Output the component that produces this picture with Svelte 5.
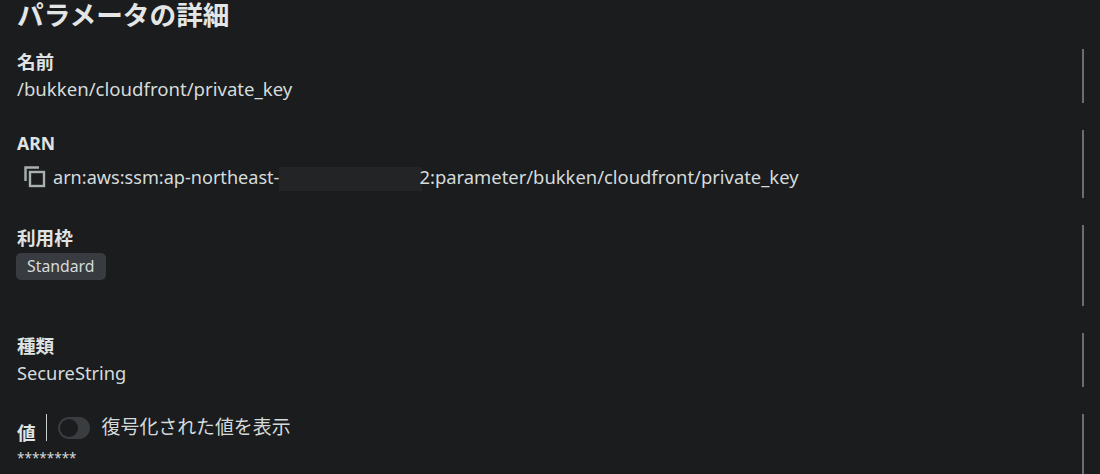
<script lang="ts">
  let showDecrypted = $state(false);
</script>

<main class="page">
  <h2 class="title">パラメータの詳細</h2>

  <dl class="fields">
    <div class="field name">
      <dt>名前</dt>
      <dd>/bukken/cloudfront/private_key</dd>
    </div>

    <div class="field arn">
      <dt class="latin">ARN</dt>
      <dd class="copy-row">
        <svg class="copy-icon" viewBox="0 0 22 22" aria-hidden="true">
          <path d="M1.5 15V1.5H15" />
          <rect x="6" y="6" width="14" height="14" />
        </svg>
        <span class="arn-text"><span class="arn-prefix">arn:aws:ssm:ap-northeast-</span><span class="redacted"></span>2:parameter/bukken/cloudfront/private_key</span>
      </dd>
    </div>

    <div class="field tier">
      <dt>利用枠</dt>
      <dd><span class="badge">Standard</span></dd>
    </div>

    <div class="field type">
      <dt>種類</dt>
      <dd>SecureString</dd>
    </div>

    <div class="field value">
      <div class="value-head">
        <dt>値</dt>
        <label class="toggle-wrap">
          <input type="checkbox" bind:checked={showDecrypted} />
          <span class="toggle"><span class="knob"></span></span>
          <span class="toggle-label">復号化された値を表示</span>
        </label>
      </div>
      <dd class="secret">********</dd>
    </div>
  </dl>
</main>

<style>
  :global(body) {
    margin: 0;
    background: #1a1c1e;
  }

  .page {
    height: 474px;
    overflow: hidden;
    padding-left: 17px;
    box-sizing: border-box;
    color: #d5dbdb;
    font-family: 'Noto Sans', 'Noto Sans CJK JP', sans-serif;
    font-size: 18.4px;
  }

  .title {
    margin: 0;
    height: 49px;
    font-size: 26.67px;
    line-height: 30px;
    font-weight: 700;
    color: #e4e6e6;
  }

  .fields {
    display: flex;
    flex-direction: column;
    gap: 27px;
    margin: 0;
    width: 1067px;
  }

  .field {
    border-right: 2px solid #6b6e70;
  }

  .name,
  .type {
    height: 54px;
  }

  .name dd {
    font-size: 18.6px;
  }

  .type dd {
    font-size: 18.3px;
  }

  .arn {
    height: 68px;
  }

  .tier {
    height: 81px;
  }

  .value {
    height: 60px;
  }

  dt {
    margin-top: -1px;
    font-size: 18.6px;
    line-height: 27px;
    font-weight: 700;
    color: #e0e3e3;
  }

  dt.latin {
    margin-top: 0;
    font-size: 17.6px;
  }

  dd {
    margin: 0;
    line-height: 27px;
  }

  .copy-row {
    display: flex;
    align-items: center;
    gap: 7px;
    padding: 6px 0 0 7px;
  }

  .copy-icon {
    width: 22px;
    height: 22px;
    flex: none;
    fill: none;
    stroke: #aab0b2;
    stroke-width: 2.4;
  }

  .arn-text {
    white-space: nowrap;
  }

  .arn-prefix {
    font-size: 18.1px;
  }

  .redacted {
    display: inline-block;
    width: 143px;
    height: 24px;
    margin-right: -3px;
    vertical-align: middle;
    background: #232425;
  }

  .badge {
    display: inline-block;
    margin-left: -1px;
    padding: 0 11px;
    height: 27px;
    line-height: 27px;
    border-radius: 5px;
    background: #383c40;
    font-size: 15.8px;
  }

  .value-head {
    display: flex;
    align-items: flex-start;
    height: 31px;
  }

  .value-head dt {
    margin-top: 5px;
    padding-right: 10px;
    height: 27px;
  }

  .toggle-wrap {
    display: flex;
    align-items: flex-start;
    gap: 12px;
    border-left: 1px solid #c8cccc;
    padding-left: 11px;
    height: 27px;
  }

  .toggle-wrap input {
    display: none;
  }

  .toggle {
    display: block;
    width: 32px;
    height: 22px;
    margin-top: 3px;
    border-radius: 11px;
    background: #3a3d40;
  }

  .knob {
    display: block;
    width: 18px;
    height: 18px;
    margin: 2px;
    border-radius: 50%;
    background: #1a1c1e;
  }

  .toggle-label {
    font-size: 18.9px;
    line-height: 26px;
    color: #d5dbdb;
  }

  .secret {
    font-size: 13.5px;
    line-height: 24px;
    padding-top: 1px;
  }
</style>
